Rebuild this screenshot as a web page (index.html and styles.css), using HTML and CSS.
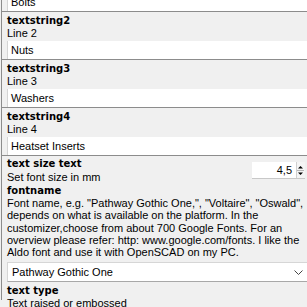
FILE: index.html
```html
<!DOCTYPE html>
<html lang="en">
<head>
  <meta charset="UTF-8">
  <title>Customizer</title>
  <link rel="stylesheet" href="styles.css">
</head>
<body>
  <div class="panel">
    <div class="line-edit first">Bolts</div>

    <div class="param">
      <div class="param-head">
        <div class="name">textstring2</div>
        <div class="desc">Line 2</div>
      </div>
      <div class="line-edit">Nuts</div>
    </div>

    <div class="param">
      <div class="param-head">
        <div class="name">textstring3</div>
        <div class="desc">Line 3</div>
      </div>
      <div class="line-edit">Washers</div>
    </div>

    <div class="param">
      <div class="param-head">
        <div class="name">textstring4</div>
        <div class="desc">Line 4</div>
      </div>
      <div class="line-edit">Heatset Inserts</div>
    </div>

    <div class="param open">
      <div class="size-row">
        <div class="param-head">
          <div class="name">text size text</div>
          <div class="desc tall">Set font size in mm</div>
        </div>
        <div class="spin">
          <div class="spin-value">4,5</div>
          <div class="spin-btns">
            <svg width="7" height="14" viewBox="0 0 7 14">
              <path d="M1 5.5 L3.5 3 L6 5.5 Z" fill="#000"/>
              <line x1="0" y1="7.5" x2="7" y2="7.5" stroke="#b5b5b5"/>
              <path d="M1 9.5 L3.5 12 L6 9.5 Z" fill="#000"/>
            </svg>
          </div>
        </div>
      </div>

      <div class="name">fontname</div>
      <div class="para">Font name, e.g. "Pathway Gothic One,", "Voltaire", "Oswald",<br>depends on what is available on the platform. In the<br>customizer,choose from about 700 Google Fonts. For an<br>overview please refer: http: www.google.com/fonts. I like the<br>Aldo font and use it with OpenSCAD on my PC.</div>
      <div class="combo">
        <span>Pathway Gothic One</span>
        <svg class="chevron" width="9" height="6" viewBox="0 0 9 6">
          <path d="M0.5 0.5 L4.5 4.5 L8.5 0.5" fill="none" stroke="#444" stroke-width="1"/>
        </svg>
      </div>

      <div class="name after-combo">text type</div>
      <div class="desc">Text raised or embossed</div>
    </div>
  </div>
</body>
</html>
```

FILE: styles.css
```css
body {
  margin: 0;
  height: 307px;
  overflow: hidden;
  background-color: #f0f0f0;
  font-family: "Liberation Sans", Arial, sans-serif;
  font-size: 11px;
  color: #000;
}

.panel {
  margin-left: 1px;
  border-left: 1px solid #8c8c8c;
  height: 307px;
}

.line-edit {
  height: 18px;
  line-height: 18px;
  margin-left: 5px;
  padding-left: 3px;
  background-color: #fff;
  border-left: 1px solid #d4d4d4;
  white-space: nowrap;
}

.line-edit.first {
  margin-top: -7px;
}

.param {
  border-top: 1px solid #8c8c8c;
}

.param-head {
  padding: 2px 0 1px 5px;
}

.name {
  font-family: "DejaVu Sans", sans-serif;
  font-weight: bold;
  font-size: 10px;
  line-height: 13px;
  white-space: nowrap;
}

.desc {
  line-height: 13px;
  white-space: nowrap;
}

.desc.tall {
  line-height: 14px;
}

.open {
  padding-left: 5px;
}

.open .param-head {
  padding: 1px 0 0 0;
}

.size-row {
  display: flex;
  justify-content: space-between;
  align-items: flex-start;
}

.spin {
  display: flex;
  margin-top: 6px;
  margin-right: 2px;
  height: 16px;
  background-color: #fff;
  border-bottom: 1px solid #c8c8c8;
}

.spin-value {
  width: 40px;
  padding-right: 4px;
  text-align: right;
  line-height: 16px;
}

.spin-btns {
  width: 8px;
  border-left: 1px solid #d0d0d0;
  background-color: #f5f5f5;
  display: flex;
  align-items: center;
}

.para {
  line-height: 12.3px;
  white-space: nowrap;
}

.combo {
  display: flex;
  align-items: center;
  justify-content: space-between;
  height: 18px;
  margin-top: 4px;
  padding: 0 4px 0 4px;
  background-color: #fff;
  border-top: 1px solid #d6d6d6;
  border-bottom: 1px solid #a8a8a8;
  border-left: 1px solid #d6d6d6;
}

.chevron {
  margin-top: 1px;
}

.after-combo {
  margin-top: 2px;
}
```
